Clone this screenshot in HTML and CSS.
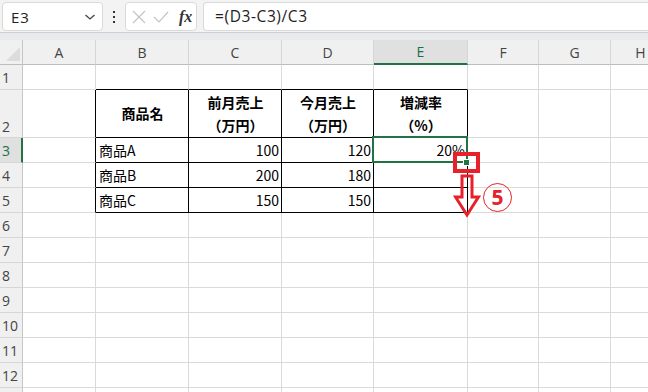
FILE: index.html
```html
<!DOCTYPE html>
<html lang="ja">
<head>
<meta charset="utf-8">
<link rel="stylesheet" href="styles.css">
</head>
<body>
<div class="app">
  <div class="toolbar">
    <div class="namebox">
      <span class="ref">E3</span>
      <svg class="chev" width="12" height="8" viewBox="0 0 12 8"><path d="M1.5 2 L6 6 L10.5 2" fill="none" stroke="#444" stroke-width="1.3"/></svg>
    </div>
    <div class="dots"><i></i><i></i><i></i></div>
    <div class="fxbox">
      <svg width="14" height="14" viewBox="0 0 14 14"><path d="M1 1 L13 13 M13 1 L1 13" stroke="#c4c4c4" stroke-width="1.2"/></svg>
      <svg width="16" height="14" viewBox="0 0 16 14"><path d="M1 7 L6 12 L15 2" fill="none" stroke="#c4c4c4" stroke-width="1.2"/></svg>
      <span class="fx">fx</span>
    </div>
    <div class="formula">=(D3-C3)/C3</div>
  </div>
  <div class="strip"></div>
  <div class="sheet">
    <div class="grid">
      <div class="corner"><svg width="18" height="18" viewBox="0 0 18 18"><path d="M17 3 L17 17 L3 17 Z" fill="#dcdcdc"/></svg></div>
      <div class="ch">A</div><div class="ch">B</div><div class="ch">C</div><div class="ch">D</div><div class="ch sel">E</div><div class="ch">F</div><div class="ch">G</div><div class="ch">H</div>

      <div class="rh">1</div><div class="c"></div><div class="c bb"></div><div class="c bb"></div><div class="c bb"></div><div class="c bb"></div><div class="c"></div><div class="c"></div><div class="c"></div>

      <div class="rh r2">2</div><div class="c br"></div>
      <div class="c t hd">商品名</div>
      <div class="c t hd">前月売上<br>（万円）</div>
      <div class="c t hd">今月売上<br>（万円）</div>
      <div class="c t hd">増減率<br>（%）</div>
      <div class="c"></div><div class="c"></div><div class="c"></div>

      <div class="rh rsel">3</div><div class="c br"></div>
      <div class="c t">商品A</div><div class="c t num">100</div><div class="c t num">120</div><div class="c t num">20%</div>
      <div class="c"></div><div class="c"></div><div class="c"></div>

      <div class="rh">4</div><div class="c br"></div>
      <div class="c t">商品B</div><div class="c t num">200</div><div class="c t num">180</div><div class="c t num"></div>
      <div class="c"></div><div class="c"></div><div class="c"></div>

      <div class="rh">5</div><div class="c br"></div>
      <div class="c t">商品C</div><div class="c t num">150</div><div class="c t num">150</div><div class="c t num"></div>
      <div class="c"></div><div class="c"></div><div class="c"></div>

      <div class="rh">6</div><div class="c"></div><div class="c"></div><div class="c"></div><div class="c"></div><div class="c"></div><div class="c"></div><div class="c"></div><div class="c"></div>
      <div class="rh">7</div><div class="c"></div><div class="c"></div><div class="c"></div><div class="c"></div><div class="c"></div><div class="c"></div><div class="c"></div><div class="c"></div>
      <div class="rh">8</div><div class="c"></div><div class="c"></div><div class="c"></div><div class="c"></div><div class="c"></div><div class="c"></div><div class="c"></div><div class="c"></div>
      <div class="rh">9</div><div class="c"></div><div class="c"></div><div class="c"></div><div class="c"></div><div class="c"></div><div class="c"></div><div class="c"></div><div class="c"></div>
      <div class="rh">10</div><div class="c"></div><div class="c"></div><div class="c"></div><div class="c"></div><div class="c"></div><div class="c"></div><div class="c"></div><div class="c"></div>
      <div class="rh">11</div><div class="c"></div><div class="c"></div><div class="c"></div><div class="c"></div><div class="c"></div><div class="c"></div><div class="c"></div><div class="c"></div>
      <div class="rh">12</div><div class="c"></div><div class="c"></div><div class="c"></div><div class="c"></div><div class="c"></div><div class="c"></div><div class="c"></div><div class="c"></div>
      <div class="rh"></div><div class="c"></div><div class="c"></div><div class="c"></div><div class="c"></div><div class="c"></div><div class="c"></div><div class="c"></div><div class="c"></div>
    </div>
    <div class="selection"></div>
    <div class="handle"></div>
    <div class="redbox"></div>
    <svg class="arrow" width="28" height="44" viewBox="0 0 28 44"><path d="M9 2 L19 2 L19 23 L25.5 23 L14 41 L2.5 23 L9 23 Z" fill="none" stroke="#e8202a" stroke-width="3" stroke-linejoin="miter"/></svg>
    <div class="step">5</div>
  </div>
</div>
</body>
</html>
```

FILE: styles.css
```css
* { box-sizing: border-box; }
html, body { margin: 0; padding: 0; }
body {
  width: 648px;
  height: 392px;
  overflow: hidden;
  background: #ffffff;
  font-family: "Noto Sans CJK JP", "Noto Sans", sans-serif;
}
.app { width: 648px; height: 392px; overflow: hidden; }

.toolbar {
  height: 33px;
  background: #f3f3f3;
  border-bottom: 1px solid #cfcfcf;
  display: flex;
  align-items: flex-start;
  padding: 2px 0 0 2px;
}
.namebox {
  width: 101px;
  height: 29px;
  background: #fff;
  border: 1px solid #dadada;
  border-radius: 4px;
  display: flex;
  align-items: center;
  justify-content: space-between;
  padding: 0 6px 0 8px;
}
.ref {
  font-family: "Segoe UI", "Open Sans", "Noto Sans", sans-serif;
  font-size: 15px;
  color: #222;
  letter-spacing: 0.8px;
}
.dots {
  width: 22px;
  height: 29px;
  display: flex;
  flex-direction: column;
  align-items: center;
  justify-content: center;
  gap: 3px;
}
.dots i { display: block; width: 2px; height: 2px; background: #333; }
.fxbox {
  width: 72px;
  height: 29px;
  background: #fff;
  border: 1px solid #dadada;
  border-radius: 4px;
  display: flex;
  align-items: center;
  gap: 7px;
  padding-left: 6px;
}
.fx {
  font-family: "Liberation Serif", "DejaVu Serif", serif;
  font-style: italic;
  font-weight: bold;
  font-size: 16px;
  color: #333;
  margin-left: 3px;
}
.formula {
  margin-left: 6px;
  flex: 1;
  height: 29px;
  background: #fff;
  border: 1px solid #dadada;
  border-right: none;
  border-radius: 4px 0 0 4px;
  padding-left: 11px;
  font-family: "Segoe UI", "Open Sans", "Noto Sans", sans-serif;
  font-size: 15.5px;
  letter-spacing: 0.6px;
  line-height: 27px;
  color: #222;
}
.strip { height: 7px; background: #e8eaed; }

.sheet { position: relative; }
.grid {
  display: grid;
  grid-template-columns: 23px 73px 93px 93px 92px 94px 71px 72px 60px;
  grid-template-rows: 25px 25px 48px repeat(11, 25px);
}
.corner {
  background: #f0f0f0;
  border-right: 1px solid #c6c6c6;
  border-bottom: 1px solid #bdbdbd;
  display: flex;
  align-items: flex-end;
  justify-content: flex-end;
  padding: 0 1px 2px 0;
}
.ch {
  background: #f0f0f0;
  border-right: 1px solid #d6d6d6;
  border-bottom: 1px solid #bdbdbd;
  font-family: "Segoe UI", "Open Sans", "Noto Sans", sans-serif;
  font-size: 14px;
  color: #444;
  display: flex;
  align-items: center;
  justify-content: center;
}
.ch.sel {
  background: #e0e0e0;
  color: #1a7048;
  border-bottom: 2px solid #217346;
}
.rh {
  background: #f0f0f0;
  border-right: 1px solid #c6c6c6;
  border-bottom: 1px solid #d6d6d6;
  font-family: "Segoe UI", "Open Sans", "Noto Sans", sans-serif;
  font-size: 14px;
  color: #444;
  display: flex;
  align-items: flex-end;
  justify-content: flex-start;
  padding: 0 0 0 2px;
  line-height: 23px;
}
.rh.r2 { line-height: 21px; }
.rh.rsel {
  background: #e0e0e0;
  color: #1a7048;
  border-right: 2px solid #217346;
}
.c {
  border-right: 1px solid #dadada;
  border-bottom: 1px solid #dadada;
}
.c.bb { border-bottom-color: #000; }
.c.br { border-right-color: #000; }
.c.t {
  border-right-color: #000;
  border-bottom-color: #000;
  font-size: 14px;
  color: #000;
  display: flex;
  align-items: center;
  padding: 0 2px 0 3px;
}
.c.num { justify-content: flex-end; }
.c.hd {
  font-weight: bold;
  justify-content: center;
  text-align: center;
  line-height: 23px;
}

.selection {
  position: absolute;
  left: 372px;
  top: 96px;
  width: 96px;
  height: 27px;
  border: 2px solid #217346;
}
.handle {
  position: absolute;
  left: 463px;
  top: 119px;
  width: 7px;
  height: 7px;
  background: #217346;
  border: 1px solid #fff;
}
.redbox {
  position: absolute;
  left: 453px;
  top: 112px;
  width: 27px;
  height: 21px;
  border: 4px solid #e8202a;
}
.arrow {
  position: absolute;
  left: 453px;
  top: 134px;
}
.step {
  position: absolute;
  left: 483px;
  top: 143px;
  width: 29px;
  height: 29px;
  border: 1.5px solid #e8202a;
  border-radius: 50%;
  display: flex;
  align-items: center;
  justify-content: center;
  font-family: "Noto Sans", "Liberation Sans", sans-serif;
  font-weight: bold;
  font-size: 21px;
  line-height: 1;
  color: #e8202a;
}
```
